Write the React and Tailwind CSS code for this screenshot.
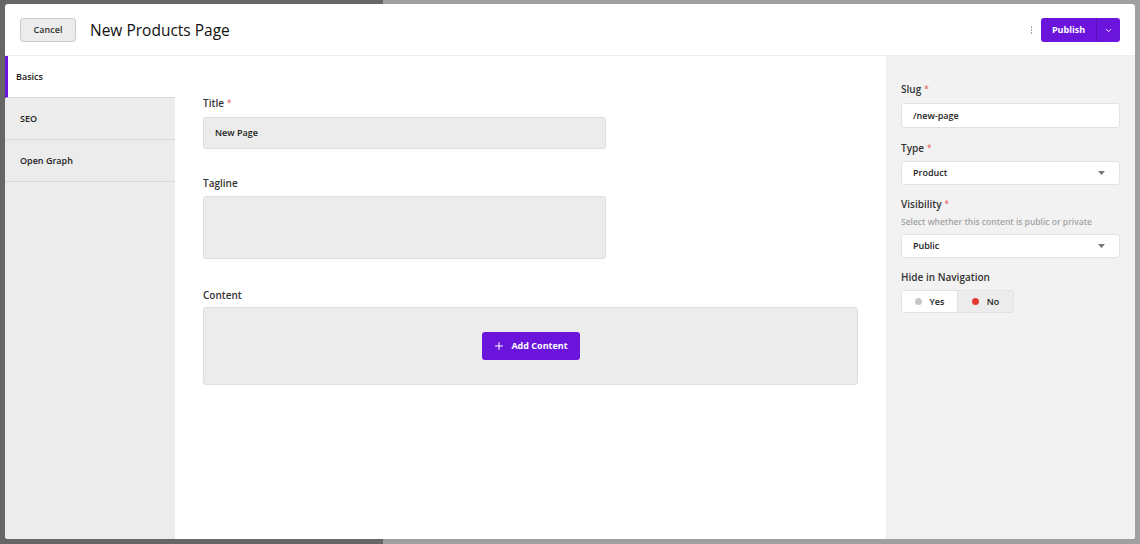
import { Plus, ChevronDown } from "lucide-react";

const font = { fontFamily: '"Open Sans", "Noto Sans", sans-serif' };

function Label({ children, required }) {
  return (
    <div className="text-[10px] leading-[14px] font-semibold text-[#333]">
      {children}
      {required && <span className="ml-[3px] align-top text-[8px] text-[#e86a6a]">*</span>}
    </div>
  );
}

function Caret() {
  return (
    <svg width="7" height="4" viewBox="0 0 7 4" className="text-[#777]">
      <path d="M0 0h7L3.5 4z" fill="currentColor" />
    </svg>
  );
}

function SelectBox({ value }) {
  return (
    <div className="flex h-[24px] items-center justify-between rounded-[3px] border border-[#e2e2e2] bg-white pl-[11px] pr-[14px] text-[9px] font-semibold text-[#222]">
      <span>{value}</span>
      <Caret />
    </div>
  );
}

const navItems = ["Basics", "SEO", "Open Graph"];

export default function App() {
  return (
    <div
      className="h-[544px] w-[1140px] overflow-hidden bg-[linear-gradient(to_right,#666666_383px,#a0a0a0_383px)] pb-[5px] pl-[5px] pr-[5px] pt-[4px]"
      style={font}
    >
      <div className="flex h-full flex-col overflow-hidden rounded-[3px] bg-white">
        {/* header */}
        <div className="flex h-[52px] shrink-0 items-center border-b border-[#eeeeee] pl-[15px] pr-[15px] pt-[1px]">
          <button className="h-[24px] w-[56px] rounded-[3px] border border-[#c9c9c9] bg-[#ececec] text-[9px] font-semibold text-[#333]">
            Cancel
          </button>
          <h1 className="ml-[14px] mt-[2px] text-[15.5px] font-medium text-[#111]">New Products Page</h1>
          <div className="ml-auto flex items-center">
            <div className="mr-[9px] flex flex-col gap-[1.5px]">
              <span className="h-[1.5px] w-[1.5px] rounded-full bg-[#999]" />
              <span className="h-[1.5px] w-[1.5px] rounded-full bg-[#999]" />
              <span className="h-[1.5px] w-[1.5px] rounded-full bg-[#999]" />
            </div>
            <div className="flex h-[24px] overflow-hidden rounded-[3px] bg-[#6a14dc] text-white">
              <span className="flex w-[55px] items-center justify-center text-[9px] font-bold">Publish</span>
              <span className="flex w-[24px] items-center justify-center border-l border-[#5810b8]">
                <ChevronDown size={9} strokeWidth={2.5} />
              </span>
            </div>
          </div>
        </div>

        {/* body */}
        <div className="flex min-h-0 flex-1">
          <nav className="w-[170px] shrink-0 bg-[#ececec]">
            {navItems.map((item, i) =>
              i === 0 ? (
                <div
                  key={item}
                  className="flex h-[42px] items-center border-b border-[#d9d9d9] border-l-[3px] border-l-[#6a14dc] bg-white pl-[8px] text-[9px] font-semibold text-[#222]"
                >
                  {item}
                </div>
              ) : (
                <div
                  key={item}
                  className="flex h-[42px] items-center border-b border-[#d9d9d9] pl-[15px] text-[9px] font-semibold text-[#222]"
                >
                  {item}
                </div>
              )
            )}
          </nav>

          <main className="flex-1 px-[28px] pt-[40px]">
            <Label required>Title</Label>
            <div className="mt-[7px] flex h-[32px] w-[403px] items-center rounded-[3px] border border-[#dedede] bg-[#ececec] pl-[11px] text-[9px] font-semibold text-[#222]">
              New Page
            </div>

            <div className="mt-[27px]">
              <Label>Tagline</Label>
            </div>
            <div className="mt-[6px] h-[63px] w-[403px] rounded-[3px] border border-[#dedede] bg-[#ececec]" />

            <div className="mt-[29px]">
              <Label>Content</Label>
            </div>
            <div className="mt-[5px] flex h-[78px] items-center justify-center rounded-[3px] border border-[#dedede] bg-[#ececec]">
              <button className="flex h-[28px] w-[98px] items-center justify-center gap-[6px] rounded-[3px] bg-[#6a14dc] text-[9px] font-bold text-white">
                <Plus size={12} strokeWidth={2} />
                Add Content
              </button>
            </div>
          </main>

          <aside className="w-[249px] shrink-0 border-l border-[#ebebeb] bg-[#f2f2f2] pl-[14px] pr-[15px] pt-[26px]">
            <Label required>Slug</Label>
            <div className="mt-[7px] flex h-[25px] items-center rounded-[3px] border border-[#e2e2e2] bg-white pl-[11px] text-[9px] font-semibold text-[#222]">
              /new-page
            </div>

            <div className="mt-[13px]">
              <Label required>Type</Label>
            </div>
            <div className="mt-[6px]">
              <SelectBox value="Product" />
            </div>

            <div className="mt-[12px]">
              <Label required>Visibility</Label>
            </div>
            <div className="mt-[5px] text-[8.5px] font-semibold leading-[12px] text-[#a3a3a3]">
              Select whether this content is public or private
            </div>
            <div className="mt-[6px]">
              <SelectBox value="Public" />
            </div>

            <div className="mt-[12px]">
              <Label>Hide in Navigation</Label>
            </div>
            <div className="mt-[6px] flex h-[23px] w-[113px] overflow-hidden rounded-[3px] border border-[#e2e2e2] text-[9px] font-semibold text-[#222]">
              <div className="flex flex-1 items-center justify-center gap-[8px] bg-white">
                <span className="h-[7px] w-[7px] rounded-full bg-[#c8c8c8]" />
                Yes
              </div>
              <div className="flex flex-1 items-center justify-center gap-[8px] border-l border-[#e2e2e2] bg-[#ececec]">
                <span className="h-[7px] w-[7px] rounded-full bg-[#e53935]" />
                No
              </div>
            </div>
          </aside>
        </div>
      </div>
    </div>
  );
}
